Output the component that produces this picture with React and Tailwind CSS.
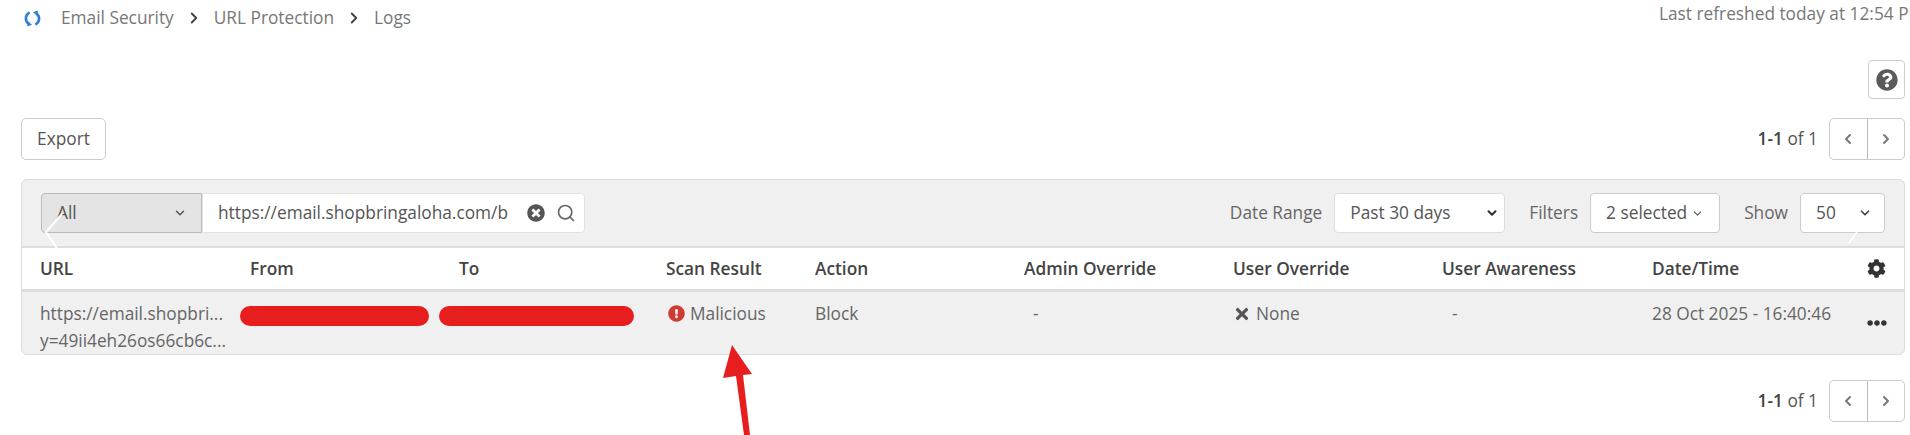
import { ChevronDown, ChevronLeft, ChevronRight, Search } from 'lucide-react'
import { FaCog, FaEllipsisH, FaExclamationCircle, FaQuestionCircle, FaTimes, FaTimesCircle } from 'react-icons/fa'

const columns = ['URL', 'From', 'To', 'Scan Result', 'Action', 'Admin Override', 'User Override', 'User Awareness', 'Date/Time']
const gridCols = 'grid grid-cols-[210px_209px_207px_149px_209px_209px_209px_210px_215px_19px]'

function SyncIcon() {
  return (
    <svg viewBox="0 0 18 18" className="w-[17px] h-[17px]" fill="none" stroke="#2f7fd6" strokeWidth="2.8">
      <path d="M6 2.5C3.4 4 2 6.4 2 9c0 2.4 1.2 4.3 3 5.6" />
      <path d="M3.5 11.5 8.5 15.5 3.5 17.5z" fill="#2f7fd6" stroke="none" />
      <path d="M12 15.5c2.600-1.500 4-3.900 4-6.500 0-2.400-1.200-4.300-3-5.600" />
      <path d="M14.500 6.500 9.500 2.500 14.500.5z" fill="#2f7fd6" stroke="none" />
    </svg>
  )
}

function Pager() {
  return (
    <div className="flex items-center">
      <span className="text-[#555] mr-[11px]"><b className="font-semibold text-[#444]">1-1</b> of 1</span>
      <div className="flex h-[42px] w-[76px] bg-white border border-[#ccc] rounded-[5px]">
        <div className="flex-1 flex items-center justify-center border-r border-[#bbb]">
          <ChevronLeft className="w-4 h-4 text-[#777]" strokeWidth={3} />
        </div>
        <div className="flex-1 flex items-center justify-center">
          <ChevronRight className="w-4 h-4 text-[#777]" strokeWidth={3} />
        </div>
      </div>
    </div>
  )
}

export default function App() {
  return (
    <div className="relative h-[435px] overflow-hidden bg-white font-['Open_Sans',sans-serif] text-[17.3px] text-[#666]">
      {/* breadcrumb */}
      <div className="flex items-start h-[60px] pl-[24px]">
        <div className="flex-1 flex items-center h-[36px] text-[#777]">
          <SyncIcon />
          <span className="ml-[20px]">Email Security</span>
          <ChevronRight className="w-[18px] h-[18px] mx-[11px] text-[#444]" strokeWidth={2.5} />
          <span>URL Protection</span>
          <ChevronRight className="w-[18px] h-[18px] mx-[11px] text-[#444]" strokeWidth={2.5} />
          <span>Logs</span>
        </div>
        <div className="w-[251px] shrink-0 pt-[1px] text-[#777] whitespace-nowrap">Last refreshed today at 12:54 PM</div>
      </div>

      <div className="flex justify-end pr-[5px] h-[58px]">
        <div className="flex items-center justify-center w-[37px] h-[39px] bg-white border border-[#ccc] rounded-[4px]">
          <FaQuestionCircle className="w-[22px] h-[22px] text-[#5a5a5a]" />
        </div>
      </div>

      <div className="flex items-center justify-between pl-[21px] pr-[5px] h-[42px]">
        <div className="flex items-center justify-center w-[85px] h-[42px] border border-[#ccc] rounded-[5px] text-[#555]">Export</div>
        <Pager />
      </div>

      {/* table panel */}
      <div className="ml-[21px] mr-[5px] mt-[19px] bg-[#f0f0f0] border border-[#ddd] rounded-[6px] overflow-hidden">
        <div className="flex items-center h-[68px] pl-[19px] pr-[19px] border-b-2 border-[#ddd]">
          <div className="flex flex-1 h-[40px]">
            <div className="flex items-center justify-between w-[161px] pl-[15px] pr-[14px] bg-[#e4e4e4] border border-[#bbb] rounded-l-[4px] text-[#555]">
              All
              <ChevronDown className="w-[14px] h-[14px] text-[#555]" strokeWidth={2.5} />
            </div>
            <div className="flex items-center w-[383px] pl-[15px] pr-[8px] bg-white border border-[#e2e2e2] rounded-r-[4px] text-[#555]">
              <span className="flex-1 whitespace-nowrap overflow-hidden">https://email.shopbringaloha.com/b</span>
              <FaTimesCircle className="w-[18px] h-[18px] text-[#555] ml-[14px]" />
              <Search className="w-[20px] h-[20px] text-[#666] ml-[11px]" />
            </div>
          </div>
          <span className="text-[#666] mr-[12px]">Date Range</span>
          <div className="flex items-center justify-between w-[171px] h-[40px] pl-[15px] pr-[5px] bg-white border border-[#ddd] rounded-[4px] text-[#555]">
            Past 30 days
            <ChevronDown className="w-[14px] h-[14px] text-[#333]" strokeWidth={3.5} />
          </div>
          <span className="text-[#666] ml-[24px] mr-[12px]">Filters</span>
          <div className="flex items-center justify-center gap-1 w-[130px] h-[40px] bg-white border border-[#ccc] rounded-[4px] text-[#555]">
            2 selected
            <ChevronDown className="w-[13px] h-[13px] text-[#555]" />
          </div>
          <span className="text-[#666] ml-[24px] mr-[12px]">Show</span>
          <div className="flex items-center justify-between w-[85px] h-[40px] pl-[15px] pr-[12px] bg-white border border-[#ccc] rounded-[4px] text-[#555]">
            50
            <ChevronDown className="w-[14px] h-[14px] text-[#444]" strokeWidth={3} />
          </div>
        </div>

        <div className={`${gridCols} items-center h-[44px] pl-[18px] bg-white border-b-[3px] border-[#ddd] font-semibold text-[#444]`}>
          {columns.map(c => <span key={c}>{c}</span>)}
          <FaCog className="w-[19px] h-[19px] text-[#333]" />
        </div>

        <div className={`${gridCols} h-[62px] pl-[18px] pt-[8px] leading-[27px] text-[#666]`}>
          <div className="whitespace-nowrap">
            <div>https://email.shopbri...</div>
            <div>y=49ii4eh26os66cb6c...</div>
          </div>
          <div className="-ml-[10px] mt-[6px] w-[189px] h-[20px] bg-[#e61e1e] rounded-full" />
          <div className="-ml-[20px] mt-[6px] w-[195px] h-[20px] bg-[#e61e1e] rounded-full" />
          <div className="flex items-start gap-[5px]">
            <FaExclamationCircle className="w-[17px] h-[17px] text-[#cf3a34] mt-[5px] ml-[2px]" />
            Malicious
          </div>
          <div>Block</div>
          <div className="pl-[9px]">-</div>
          <div className="flex items-start gap-[5px]">
            <FaTimes className="w-[18px] h-[18px] text-[#555] mt-[5px]" />
            None
          </div>
          <div className="pl-[10px]">-</div>
          <div className="whitespace-nowrap">28 Oct 2025 - 16:40:46</div>
          <FaEllipsisH className="w-[20px] h-[20px] text-[#333] mt-[13px]" />
        </div>
      </div>

      <div className="flex justify-end pr-[5px] mt-[25px]">
        <Pager />
      </div>

      {/* annotation arrow and carousel arrows sitting over the page */}
      <svg className="absolute left-0 top-0 w-[1910px] h-[435px] pointer-events-none" viewBox="0 0 1910 435" fill="none">
        <path d="M732 345 752 374 743 375 750 435 744 435 736 376 723 378z" fill="#e61e1e" />
        <path d="M62 214 46 232 62 256" stroke="#fff" strokeWidth="2" />
        <path d="M1857 232 1849 243" stroke="#fff" strokeWidth="2" />
      </svg>
    </div>
  )
}
